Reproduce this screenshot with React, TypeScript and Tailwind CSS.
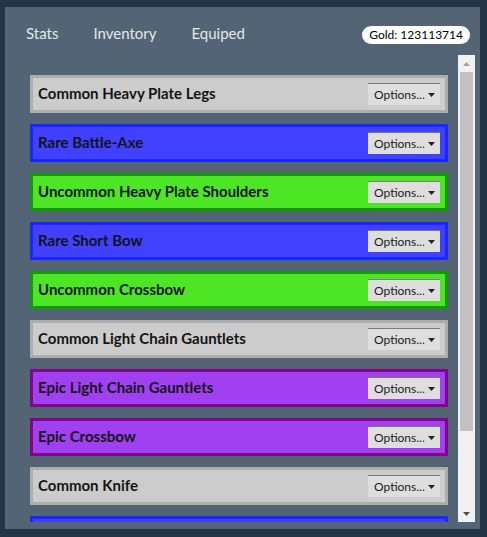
import React from "react";

type Rarity = "Common" | "Uncommon" | "Rare" | "Epic";

const rarityStyles: Record<Rarity, string> = {
  Common: "bg-[#cbcccb] border-[#adadad]",
  Uncommon: "bg-[#4de624] border-[#13990a]",
  Rare: "bg-[#4040ff] border-[#1a28ff]",
  Epic: "bg-[#a040f0] border-[#80058a]",
};

const items: { name: string; rarity: Rarity }[] = [
  { name: "Common Heavy Plate Legs", rarity: "Common" },
  { name: "Rare Battle-Axe", rarity: "Rare" },
  { name: "Uncommon Heavy Plate Shoulders", rarity: "Uncommon" },
  { name: "Rare Short Bow", rarity: "Rare" },
  { name: "Uncommon Crossbow", rarity: "Uncommon" },
  { name: "Common Light Chain Gauntlets", rarity: "Common" },
  { name: "Epic Light Chain Gauntlets", rarity: "Epic" },
  { name: "Epic Crossbow", rarity: "Epic" },
  { name: "Common Knife", rarity: "Common" },
  { name: "Rare Heavy Plate Helm", rarity: "Rare" },
];

function ItemRow({ name, rarity }: { name: string; rarity: Rarity }) {
  return (
    <div
      className={`flex items-center justify-between h-[38px] border-[3px] pl-[5px] pr-[5px] shrink-0 ${rarityStyles[rarity]}`}
    >
      <span className="text-[15px] font-bold text-[#141414] mb-[1px]">{name}</span>
      <button className="flex items-center gap-[3px] h-[22px] w-[72px] pl-[6px] bg-[#dedede] border-t border-[#7a7a7a] text-[12px] text-[#1a1a1a]">
        Options...
        <svg width="7" height="4" viewBox="0 0 7 4">
          <path d="M0 0h7L3.5 4z" fill="#222" />
        </svg>
      </button>
    </div>
  );
}

// drawn scrollbar, the list itself is clipped
function Scrollbar() {
  return (
    <div className="w-[17px] h-full bg-[#f1f1f1] flex flex-col items-center shrink-0">
      <div className="h-[17px] w-full flex items-center justify-center">
        <svg width="7" height="4" viewBox="0 0 7 4">
          <path d="M3.5 0L7 4H0z" fill="#a3a3a3" />
        </svg>
      </div>
      <div className="w-[13px] h-[359px] bg-[#c1c1c1]" />
      <div className="mt-auto h-[17px] w-full flex items-center justify-center">
        <svg width="7" height="4" viewBox="0 0 7 4">
          <path d="M0 0h7L3.5 4z" fill="#505050" />
        </svg>
      </div>
    </div>
  );
}

export default function App() {
  const tabs = ["Stats", "Inventory", "Equiped"];

  return (
    <div
      className="w-[487px] h-[537px] bg-[#243447] pt-[7px] pl-[5px] overflow-hidden"
      style={{ fontFamily: "Lato, 'Liberation Sans', sans-serif" }}
    >
      <div className="w-[475px] h-[522px] bg-[#536475] flex flex-col">
        {/* header */}
        <div className="flex items-center h-[48px] pt-[8px] pl-[21px] pr-[10px] shrink-0">
          <div className="flex items-center gap-[35px] text-[15px] text-[#e3e7eb] mb-[3px]">
            {tabs.map((t) => (
              <span key={t}>{t}</span>
            ))}
          </div>
          <div className="ml-auto h-[18px] px-[7px] flex items-center rounded-full bg-white text-[12px] text-black">
            Gold: 123113714
          </div>
        </div>

        {/* inventory list */}
        <div className="ml-[15px] w-[455px] h-[467px] flex">
          <div className="flex-1 overflow-hidden">
            <div className="flex flex-col gap-[11px] pt-[20px] px-[10px]">
              {items.map((it, i) => (
                <ItemRow key={i} name={it.name} rarity={it.rarity} />
              ))}
            </div>
          </div>
          <Scrollbar />
        </div>
      </div>
    </div>
  );
}
